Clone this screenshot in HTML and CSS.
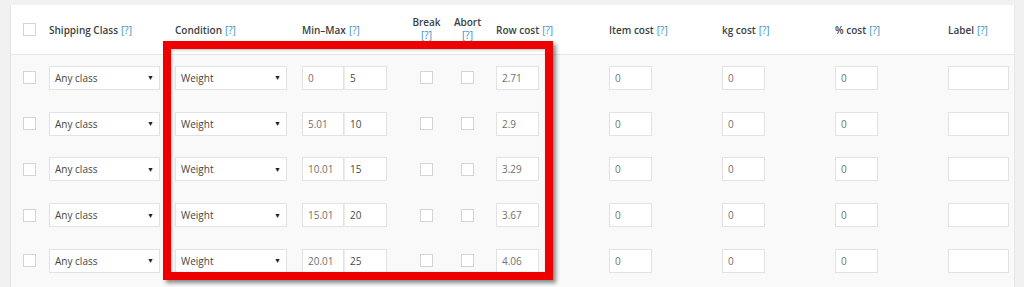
FILE: index.html
```html
<!DOCTYPE html>
<html>
<head>
<meta charset="utf-8">
<link rel="stylesheet" href="styles.css">
</head>
<body>
<div class="page">
  <div class="table">
    <div class="row head">
      <div class="cell c-check"><span class="cb"></span></div>
      <div class="cell">Shipping Class <a class="tip">[?]</a></div>
      <div class="cell">Condition <a class="tip">[?]</a></div>
      <div class="cell">Min–Max <a class="tip">[?]</a></div>
      <div class="cell center stack"><span>Break</span><a class="tip">[?]</a></div>
      <div class="cell center stack"><span>Abort</span><a class="tip">[?]</a></div>
      <div class="cell c-row">Row cost <a class="tip">[?]</a></div>
      <div class="cell">Item cost <a class="tip">[?]</a></div>
      <div class="cell">kg cost <a class="tip">[?]</a></div>
      <div class="cell">% cost <a class="tip">[?]</a></div>
      <div class="cell">Label <a class="tip">[?]</a></div>
    </div>

    <div class="row body">
      <div class="cell c-check"><span class="cb"></span></div>
      <div class="cell"><div class="sel w-class">Any class<span class="arrow">▼</span></div></div>
      <div class="cell"><div class="sel w-cond">Weight<span class="arrow">▼</span></div></div>
      <div class="cell pair"><div class="inp w-mm">0</div><div class="inp w-mm2">5</div></div>
      <div class="cell center"><span class="cb"></span></div>
      <div class="cell center"><span class="cb"></span></div>
      <div class="cell c-row"><div class="inp w-num">2.71</div></div>
      <div class="cell"><div class="inp w-num">0</div></div>
      <div class="cell"><div class="inp w-num">0</div></div>
      <div class="cell"><div class="inp w-num">0</div></div>
      <div class="cell"><div class="inp w-label"></div></div>
    </div>

    <div class="row body">
      <div class="cell c-check"><span class="cb"></span></div>
      <div class="cell"><div class="sel w-class">Any class<span class="arrow">▼</span></div></div>
      <div class="cell"><div class="sel w-cond">Weight<span class="arrow">▼</span></div></div>
      <div class="cell pair"><div class="inp w-mm">5.01</div><div class="inp w-mm2">10</div></div>
      <div class="cell center"><span class="cb"></span></div>
      <div class="cell center"><span class="cb"></span></div>
      <div class="cell c-row"><div class="inp w-num">2.9</div></div>
      <div class="cell"><div class="inp w-num">0</div></div>
      <div class="cell"><div class="inp w-num">0</div></div>
      <div class="cell"><div class="inp w-num">0</div></div>
      <div class="cell"><div class="inp w-label"></div></div>
    </div>

    <div class="row body">
      <div class="cell c-check"><span class="cb"></span></div>
      <div class="cell"><div class="sel w-class">Any class<span class="arrow">▼</span></div></div>
      <div class="cell"><div class="sel w-cond">Weight<span class="arrow">▼</span></div></div>
      <div class="cell pair"><div class="inp w-mm">10.01</div><div class="inp w-mm2">15</div></div>
      <div class="cell center"><span class="cb"></span></div>
      <div class="cell center"><span class="cb"></span></div>
      <div class="cell c-row"><div class="inp w-num">3.29</div></div>
      <div class="cell"><div class="inp w-num">0</div></div>
      <div class="cell"><div class="inp w-num">0</div></div>
      <div class="cell"><div class="inp w-num">0</div></div>
      <div class="cell"><div class="inp w-label"></div></div>
    </div>

    <div class="row body">
      <div class="cell c-check"><span class="cb"></span></div>
      <div class="cell"><div class="sel w-class">Any class<span class="arrow">▼</span></div></div>
      <div class="cell"><div class="sel w-cond">Weight<span class="arrow">▼</span></div></div>
      <div class="cell pair"><div class="inp w-mm">15.01</div><div class="inp w-mm2">20</div></div>
      <div class="cell center"><span class="cb"></span></div>
      <div class="cell center"><span class="cb"></span></div>
      <div class="cell c-row"><div class="inp w-num">3.67</div></div>
      <div class="cell"><div class="inp w-num">0</div></div>
      <div class="cell"><div class="inp w-num">0</div></div>
      <div class="cell"><div class="inp w-num">0</div></div>
      <div class="cell"><div class="inp w-label"></div></div>
    </div>

    <div class="row body">
      <div class="cell c-check"><span class="cb"></span></div>
      <div class="cell"><div class="sel w-class">Any class<span class="arrow">▼</span></div></div>
      <div class="cell"><div class="sel w-cond">Weight<span class="arrow">▼</span></div></div>
      <div class="cell pair"><div class="inp w-mm">20.01</div><div class="inp w-mm2">25</div></div>
      <div class="cell center"><span class="cb"></span></div>
      <div class="cell center"><span class="cb"></span></div>
      <div class="cell c-row"><div class="inp w-num">4.06</div></div>
      <div class="cell"><div class="inp w-num">0</div></div>
      <div class="cell"><div class="inp w-num">0</div></div>
      <div class="cell"><div class="inp w-num">0</div></div>
      <div class="cell"><div class="inp w-label"></div></div>
    </div>

    <div class="highlight"></div>
  </div>
</div>
</body>
</html>
```

FILE: styles.css
```css
html, body {
  margin: 0;
  padding: 0;
  background: #f1f1f1;
  overflow: hidden;
}
body {
  width: 1024px;
  height: 287px;
  font-family: "Open Sans", "Noto Sans", sans-serif;
  font-size: 10px;
  color: #32373c;
}
.page {
  padding: 5px 10px 0 10px;
}
.table {
  position: relative;
  width: 1003px;
  border-left: 1px solid #e3e3e3;
  border-right: 1px solid #e8e8e8;
  background: #f9f9f9;
  height: 282px;
}
.row {
  display: grid;
  grid-template-columns: 38px 126px 127px 104px 41px 41px 121px 113px 113px 113px 66px;
  align-items: center;
}
.head {
  height: 49px;
  background: #fff;
  border-bottom: 1px solid #e6e6e6;
  font-weight: 600;
  font-size: 10px;
  color: #3a3f44;
}
.body {
  height: 45.75px;
}
.cell {
  display: flex;
  align-items: center;
  white-space: nowrap;
}
.c-check {
  padding-left: 12px;
}
.c-row {
  padding-left: 8px;
}
.center {
  justify-content: center;
}
.stack {
  flex-direction: column;
  line-height: 13px;
  padding-bottom: 2px;
}
.tip {
  color: #3590c0;
  font-weight: 400;
  margin-left: 3px;
}
.stack .tip {
  margin-left: 0;
}
.cb {
  display: block;
  width: 11px;
  height: 11px;
  border: 1px solid #d4d4d4;
  background: #fff;
}
.sel, .inp {
  box-sizing: border-box;
  height: 24px;
  background: #fff;
  border: 1px solid #e2e2e2;
  display: flex;
  align-items: center;
  padding-left: 5px;
  font-size: 10px;
  color: #454545;
}
.inp {
  color: #707070;
}
.sel {
  justify-content: space-between;
  padding-right: 5px;
}
.arrow {
  font-size: 7px;
  color: #222;
}
.w-class { width: 111px; }
.w-cond { width: 112px; }
.w-mm { width: 42px; }
.w-mm2 { width: 43px; color: #4a4a4a; border-left-color: #ececec; }
.w-num { width: 43px; }
.w-label { width: 61px; }
.highlight {
  position: absolute;
  left: 152px;
  top: 36px;
  width: 374px;
  height: 223px;
  border: 8px solid #ec0000;
  box-shadow: 3px 3px 4px rgba(0,0,0,0.45), inset 1px 1px 3px rgba(0,0,0,0.25);
  pointer-events: none;
}
```
